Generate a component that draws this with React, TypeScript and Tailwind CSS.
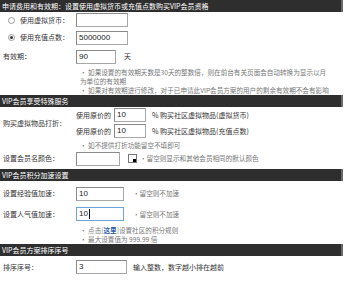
import React from 'react'

const font = { fontFamily: '"Noto Sans CJK SC", "Noto Sans", sans-serif' }

function Header({ children }: { children: React.ReactNode }) {
  return (
    <div className="flex h-[12px] w-[343px] items-center whitespace-nowrap border-r-2 border-[#6a6a6a] bg-[#2e2e2e] pl-[2px] text-[7px] leading-none text-white">
      {children}
    </div>
  )
}

function Input({ value = '', w, focus = false }: { value?: string; w: number; focus?: boolean }) {
  return (
    <div
      className={`flex h-[14px] shrink-0 items-center border bg-white pl-[2px] text-[8px] leading-none text-[#222] ${
        focus ? 'border-[#6fa2da]' : 'border-[#a7a7a7] border-t-[#8a8a8a] border-l-[#8a8a8a]'
      }`}
      style={{ width: w, fontFamily: '"Liberation Sans", sans-serif' }}
    >
      {value}
      {focus && <span className="ml-px h-[10px] w-px bg-black" />}
    </div>
  )
}

function Radio({ checked }: { checked?: boolean }) {
  return (
    <span className="flex h-[7px] w-[7px] shrink-0 items-center justify-center rounded-full border border-[#9a9a9a] bg-white">
      {checked && <span className="h-[3px] w-[3px] rounded-full bg-[#333]" />}
    </span>
  )
}

function Note({ children }: { children: React.ReactNode }) {
  return <div className="whitespace-nowrap pl-[80px] text-[6.6px] leading-[9px] text-[#777]">{children}</div>
}

export default function App() {
  return (
    <div className="h-[287px] w-[354px] overflow-hidden whitespace-nowrap bg-white text-[7px] leading-none text-[#333]" style={font}>
      <Header>申请费用和有效期：设置使用虚拟货币或充值点数购买VIP会员资格</Header>

      <div className="flex h-[16px] items-center">
        <div className="flex w-[76px] items-center gap-[5px] pl-[8px]">
          <Radio />
          <span>使用虚拟货币：</span>
        </div>
        <Input w={52} />
      </div>
      <div className="flex h-[19px] items-center">
        <div className="flex w-[76px] items-center gap-[5px] pl-[8px]">
          <Radio checked />
          <span>使用充值点数：</span>
        </div>
        <Input w={52} value="5000000" />
      </div>
      <div className="flex h-[19px] items-center">
        <div className="w-[76px] pl-[3px]">有效期：</div>
        <Input w={40} value="90" />
        <span className="ml-[8px]">天</span>
      </div>
      <div className="pt-[2px]">
        <Note>• 如果设置的有效期天数是30天的整数倍，则在前台有关页面会自动转换为显示以月</Note>
        <Note>为单位的有效期</Note>
        <Note>• 如果对有效期进行修改，对于已申请此VIP会员方案的用户的剩余有效期不会有影响</Note>
      </div>

      <Header>VIP会员享受特殊服务</Header>
      <div className="flex items-center">
        <div className="w-[76px] pl-[3px]">购买虚拟物品打折：</div>
        <div className="flex flex-col">
          <div className="flex h-[16px] items-center">
            <span className="w-[38px]">使用原价的</span>
            <Input w={32} value="10" />
            <span className="ml-[6px]">% 购买社区虚拟物品(虚拟货币)</span>
          </div>
          <div className="flex h-[16px] items-center">
            <span className="w-[38px]">使用原价的</span>
            <Input w={32} value="10" />
            <span className="ml-[6px]">% 购买社区虚拟物品(充值点数)</span>
          </div>
        </div>
      </div>
      <div className="pt-[2px]">
        <Note>• 如不提供打折功能留空不填即可</Note>
      </div>
      <div className="flex h-[17px] items-center">
        <div className="w-[76px] pl-[3px]">设置会员名颜色：</div>
        <Input w={44} />
        <span className="relative ml-[8px] h-[9px] w-[9px] shrink-0 border border-[#777] bg-white">
          <span className="absolute right-0 bottom-0 h-[3px] w-[3px] bg-black" />
        </span>
        <span className="ml-[3px] text-[6.6px] text-[#777]">•留空则显示和其他会员相同的默认颜色</span>
      </div>

      <div className="pt-[2px]">
        <Header>VIP会员积分加速设置</Header>
      </div>
      <div className="flex h-[23px] items-center pt-[2px]">
        <div className="w-[76px] pl-[3px]">设置经验值加速：</div>
        <Input w={48} value="10" />
        <span className="ml-[9px] text-[6.6px] text-[#777]">•留空则不加速</span>
      </div>
      <div className="flex h-[20px] items-center">
        <div className="w-[76px] pl-[3px]">设置人气值加速：</div>
        <Input w={48} value="10" focus />
        <span className="ml-[9px] text-[6.6px] text-[#777]">•留空则不加速</span>
      </div>
      <div className="pt-[2px]">
        <Note>
          • 点击[<span className="font-bold text-[#2a5caa]">这里</span>]设置社区的积分规则
        </Note>
        <Note>• 最大设置值为 999.99 倍</Note>
      </div>

      <Header>VIP会员方案排序序号</Header>
      <div className="flex h-[22px] items-center">
        <div className="w-[76px] pl-[3px]">排序序号：</div>
        <Input w={51} value="3" />
        <span className="ml-[6px]">输入整数，数字越小排在越前</span>
      </div>
    </div>
  )
}
